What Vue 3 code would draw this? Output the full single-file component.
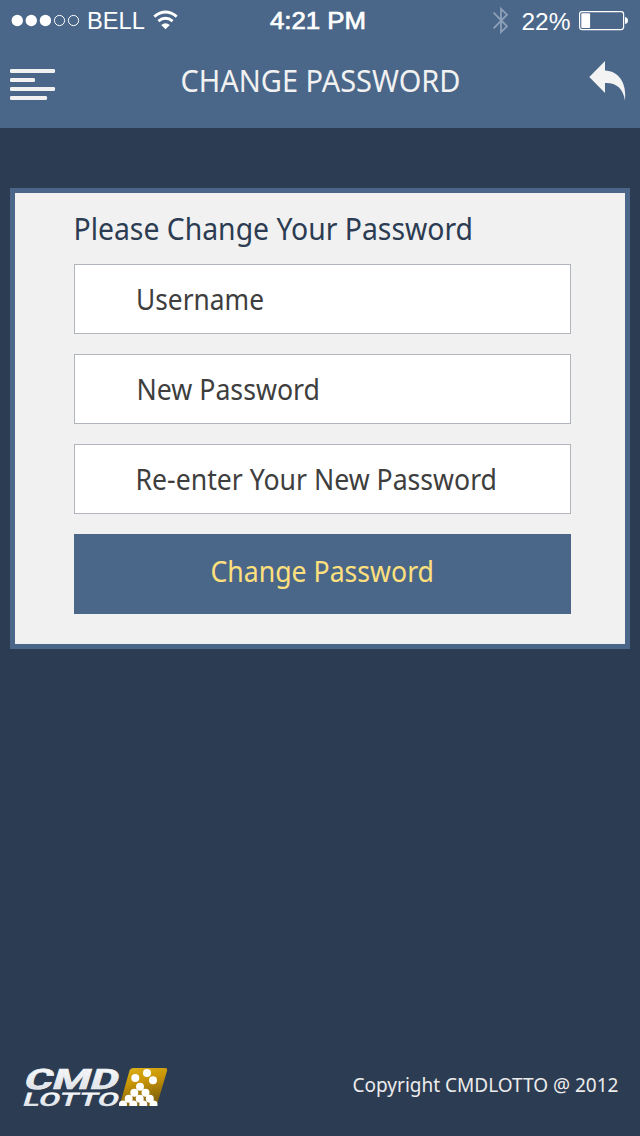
<script setup>
const fields = [
  { id: 'username', label: 'Username', x: 61, width: 128 },
  { id: 'new', label: 'New Password', x: 61.5, width: 183.5 },
  { id: 'repeat', label: 'Re-enter Your New Password', x: 60.5, width: 361.5 },
]

const balls = [
  [127, 9], [115.3, 14], [133, 16.3],
  [120, 22.7],
  [114.3, 28.7], [125.5, 28.7],
  [108.7, 34.7], [119.7, 34.7], [129.8, 34.7],
  [103, 40.4], [113.3, 40.4], [123.3, 40.4], [133.5, 40.4],
]
</script>

<template>
  <div class="screen">
    <header class="header">
      <div class="status">
        <svg class="carrier" width="200" height="40">
          <g fill="#fff">
            <circle cx="17.3" cy="20.5" r="5.7" />
            <circle cx="31.3" cy="20.5" r="5.7" />
            <circle cx="45.4" cy="20.5" r="5.7" />
          </g>
          <g fill="none" stroke="#fff" stroke-width="1">
            <circle cx="59.5" cy="20.5" r="5.1" />
            <circle cx="73.5" cy="20.5" r="5.1" />
          </g>
          <text class="sys" x="87" y="29" textLength="58" lengthAdjust="spacingAndGlyphs">BELL</text>
          <g fill="none" stroke="#fff" stroke-width="2.9">
            <path d="M154.3 16.6 Q165.5 7.6 176.7 16.6" />
            <path d="M158.4 21.1 Q165.5 15.4 172.6 21.1" />
          </g>
          <path d="M161.2 24.9 Q165.5 21.6 169.8 24.9 L165.5 29.2 Z" fill="#fff" />
        </svg>
        <svg class="clock" width="110" height="40">
          <text class="sys bold" x="5" y="29" textLength="96" lengthAdjust="spacingAndGlyphs">4:21 PM</text>
        </svg>
        <svg class="power" width="150" height="40">
          <path d="M3.6 12.6 L17 26.3 L11 32.2 V8.8 L17 14.7 L3.6 28.4" fill="none" stroke="#8da0b8" stroke-width="1.8" />
          <text class="sys" x="31.5" y="29.5" textLength="49" lengthAdjust="spacingAndGlyphs">22%</text>
          <rect x="89.6" y="11.6" width="44" height="18" rx="2.5" fill="none" stroke="#fff" stroke-width="1.2" />
          <rect x="91.3" y="13.3" width="8.8" height="14.7" rx="1" fill="#fff" />
          <path d="M135 17 Q138 17.5 138 20.5 T135 24 Z" fill="#fff" />
        </svg>
      </div>
      <nav class="bar">
        <svg class="menu" width="46" height="34" fill="#f1f1f1">
          <rect y="1" width="45" height="4" rx="1.3" />
          <rect y="10" width="25" height="4" rx="1.3" />
          <rect y="19" width="45" height="4" rx="1.3" />
          <rect y="28" width="37" height="4" rx="1.3" />
        </svg>
        <svg class="title" width="300" height="40">
          <text x="10.5" y="32" textLength="280" lengthAdjust="spacingAndGlyphs">CHANGE PASSWORD</text>
        </svg>
        <svg class="back" width="38" height="41">
          <path d="M0.3 17 L16 1 V10.5 C29 11 38 22 36 40.5 C34 28 27 22.5 16 23 V33 Z" fill="#f3f3f3" />
        </svg>
      </nav>
    </header>

    <main class="card">
      <svg class="heading" width="497" height="71">
        <text x="-0.5" y="47" textLength="399.5" lengthAdjust="spacingAndGlyphs">Please Change Your Password</text>
      </svg>
      <div class="fields">
        <div v-for="f in fields" :key="f.id" class="field">
          <svg width="495" height="68">
            <text :x="f.x" y="45" :textLength="f.width" lengthAdjust="spacingAndGlyphs">{{ f.label }}</text>
          </svg>
        </div>
        <button class="submit" type="button">
          <svg width="497" height="80">
            <text x="136.5" y="48" textLength="223.5" lengthAdjust="spacingAndGlyphs">Change Password</text>
          </svg>
        </button>
      </div>
    </main>

    <footer class="footer">
      <svg class="logo" width="150" height="60">
        <defs>
          <linearGradient id="silver" x1="0" y1="0" x2="0" y2="1">
            <stop offset="0" stop-color="#fff" />
            <stop offset="1" stop-color="#d5dbe2" />
          </linearGradient>
          <linearGradient id="gold" x1="0" y1="0" x2="0.3" y2="1">
            <stop offset="0" stop-color="#e0b41c" />
            <stop offset="0.45" stop-color="#c79405" />
            <stop offset="1" stop-color="#80600b" />
          </linearGradient>
          <clipPath id="frame"><rect x="99" y="4" width="50" height="38" /></clipPath>
        </defs>
        <text class="cmd" transform="translate(2.5 24.5) skewX(-17)" textLength="94" lengthAdjust="spacingAndGlyphs">CMD</text>
        <text class="lotto" transform="translate(1.5 41.7) skewX(-17)" textLength="96" lengthAdjust="spacingAndGlyphs">LOTTO</text>
        <g clip-path="url(#frame)">
          <path d="M99.5 42 L109.5 6.5 Q110.3 4 113 4 H145 Q147.8 4 147 7 L137.5 39 Q136.7 42 133.5 42 Z" fill="url(#gold)" />
          <circle v-for="(b, i) in balls" :key="i" :cx="b[0]" :cy="b[1]" r="4" fill="#fff" />
        </g>
      </svg>
      <svg class="copy" width="280" height="44">
        <text x="4.5" y="28" textLength="266" lengthAdjust="spacingAndGlyphs">Copyright CMDLOTTO @ 2012</text>
      </svg>
    </footer>
  </div>
</template>

<style>
body {
  margin: 0;
}
</style>

<style scoped>
.screen {
  width: 640px;
  height: 1136px;
  display: flex;
  flex-direction: column;
  background: #2c3c52;
  font-family: "Noto Sans", "Open Sans", sans-serif;
  overflow: hidden;
}
svg {
  display: block;
  flex: none;
}
.header {
  height: 128px;
  background: #4a678a;
}
.status {
  height: 40px;
  display: flex;
}
.sys {
  font-family: "Liberation Sans", Arial, sans-serif;
  font-size: 24px;
  fill: #fff;
}
.bold {
  stroke: #fff;
  stroke-width: 0.7px;
}
.clock {
  margin-left: 65px;
}
.power {
  margin-left: 115px;
}
.bar {
  display: flex;
  align-items: flex-start;
  padding: 20px 13px 0 10px;
}
.menu {
  margin-top: 8px;
}
.title {
  margin-left: 114px;
  font-size: 30px;
  fill: #f1f1f1;
}
.back {
  margin-left: 119px;
}
.card {
  box-sizing: border-box;
  width: 620px;
  height: 461px;
  margin: 60px 10px 0;
  padding: 0 59px;
  border: 5px solid #4a678a;
  background: #f1f1f1;
}
.heading {
  font-size: 30px;
  fill: #2c3c52;
}
.fields {
  width: 497px;
  display: flex;
  flex-direction: column;
  gap: 20px;
}
.field {
  height: 68px;
  border: 1px solid #b1b6bd;
  background: #fff;
  font-size: 28.5px;
}
.field text {
  fill: #3e3e3e;
}
.submit {
  height: 80px;
  padding: 0;
  border: 0;
  background: #4a678a;
  font-family: inherit;
  font-size: 28.5px;
}
.submit text {
  fill: #ffe07c;
}
.footer {
  margin: auto 12px 12px 20px;
  display: flex;
  align-items: flex-start;
  justify-content: space-between;
}
.cmd,
.lotto {
  font-family: Roboto, sans-serif;
  font-weight: 700;
  fill: url(#silver);
}
.cmd {
  font-size: 28px;
  stroke: #eef0f3;
  stroke-width: 0.6px;
}
.lotto {
  font-size: 19px;
}
.copy {
  font-size: 19px;
  fill: #ececec;
}
</style>
